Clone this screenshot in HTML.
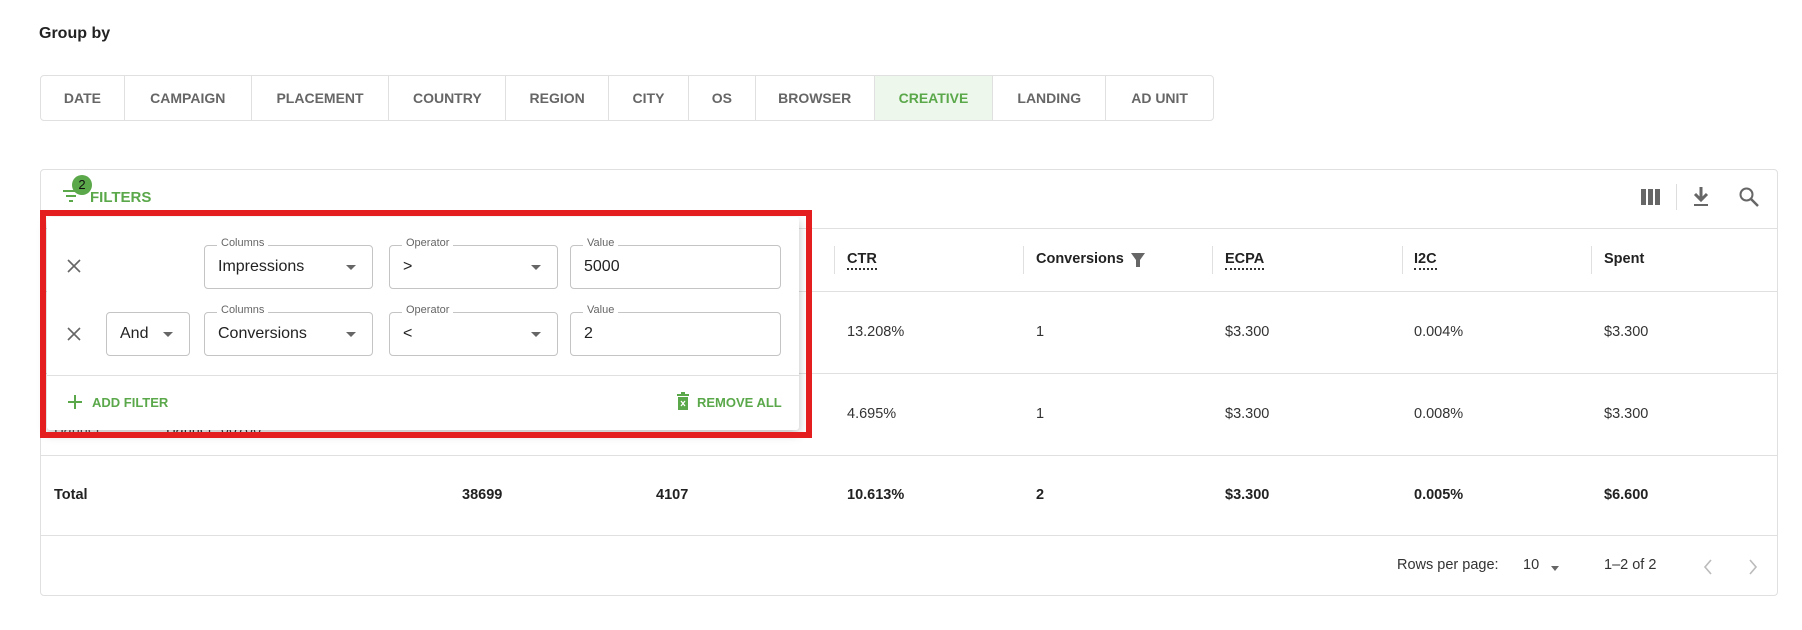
<!DOCTYPE html>
<html><head><meta charset="utf-8"><style>
*{box-sizing:border-box;margin:0;padding:0}
body{width:1802px;height:630px;background:#fff;font-family:"Liberation Sans",sans-serif;color:#222;position:relative;overflow:hidden}
.a{position:absolute;white-space:nowrap}
.tabs{position:absolute;left:40px;top:75px;width:1174px;height:46px;border:1px solid #e0e0e0;border-radius:4px;display:flex;overflow:hidden}
.tab{height:100%;border-right:1px solid #e0e0e0;display:flex;align-items:center;justify-content:center;font-size:14px;font-weight:bold;color:#666}
.tab:last-child{border-right:none}
.card{position:absolute;left:40px;top:169px;width:1738px;height:427px;border:1px solid #e0e0e0;border-radius:4px}
.hl{position:absolute;left:40px;width:1738px;height:1px;background:#e0e0e0}
.vd{position:absolute;width:1px;height:28px;background:#e0e0e0;top:246px}
.th{font-weight:bold;font-size:14.5px;color:#222}
.dot{border-bottom:2px dotted #333;padding-bottom:1px}
.td{font-size:14.5px;color:#333}
.b{font-weight:bold;color:#222}
.panel{position:absolute;left:47px;top:217px;width:752px;height:213px;background:#fff;box-shadow:0 4px 10px rgba(0,0,0,.25);border-radius:3px}
.red{position:absolute;left:40px;top:210px;width:772px;height:228px;border:6px solid #e41e1e}
.fld{position:absolute;height:44px;border:1px solid #c4c4c4;border-radius:4px;font-size:16px;color:#222;display:flex;align-items:center;padding-left:13px}
.lbl{position:absolute;top:-9px;left:12px;background:#fff;padding:0 4px;font-size:11px;color:#666}
.car{position:absolute;right:16px;top:19px;width:0;height:0;border-left:5px solid transparent;border-right:5px solid transparent;border-top:5px solid #666}
.grn{color:#5aa84a;font-weight:bold;font-size:13px}
</style></head><body>
<div class="a" style="left:39px;top:25px;font-size:16px;font-weight:bold;color:#222">Group by</div>
<div class="tabs">
<div class="tab" style="width:84px">DATE</div>
<div class="tab" style="width:127px">CAMPAIGN</div>
<div class="tab" style="width:138px">PLACEMENT</div>
<div class="tab" style="width:117px">COUNTRY</div>
<div class="tab" style="width:103px">REGION</div>
<div class="tab" style="width:80px">CITY</div>
<div class="tab" style="width:67px">OS</div>
<div class="tab" style="width:119px">BROWSER</div>
<div class="tab" style="width:119px;background:#eef7ec;color:#5aa84a">CREATIVE</div>
<div class="tab" style="width:113px">LANDING</div>
<div class="tab" style="width:107px">AD UNIT</div>
</div>
<div class="card"></div>
<div class="hl" style="top:228px"></div>
<div class="hl" style="top:291px"></div>
<div class="hl" style="top:373px"></div>
<div class="hl" style="top:455px"></div>
<div class="hl" style="top:535px"></div>
<svg class="a" style="left:62px;top:188px" width="18" height="16" viewBox="0 0 18 16"><path d="M1 3h16M4 8h10M7 13h4" stroke="#5aa84a" stroke-width="2"/></svg>
<div class="a" style="left:72px;top:175px;width:20px;height:20px;border-radius:50%;background:#5aa84a;color:#111;font-size:13px;text-align:center;line-height:20px">2</div>
<div class="a grn" style="left:90px;top:189px;font-size:15px">FILTERS</div>
<svg class="a" style="left:1641px;top:189px" width="20" height="16"><rect x="0" y="0" width="5" height="16" fill="#666"/><rect x="7" y="0" width="5" height="16" fill="#666"/><rect x="14" y="0" width="5" height="16" fill="#666"/></svg>
<div class="a" style="left:1676px;top:184px;width:1px;height:26px;background:#ddd"></div>
<svg class="a" style="left:1691px;top:186px" width="20" height="22" viewBox="0 0 20 22"><path d="M10 1v11M4 8l6 6 6-6" stroke="#666" stroke-width="3" fill="none"/><rect x="3" y="18" width="14" height="2" fill="#666"/></svg>
<svg class="a" style="left:1738px;top:186px" width="22" height="22" viewBox="0 0 22 22"><circle cx="8.5" cy="8.5" r="6" stroke="#666" stroke-width="2" fill="none"/><path d="M13 13l7 7" stroke="#666" stroke-width="2.5"/></svg>
<div class="vd" style="left:834px"></div><div class="vd" style="left:1023px"></div><div class="vd" style="left:1212px"></div><div class="vd" style="left:1402px"></div><div class="vd" style="left:1591px"></div>
<div class="a th" style="left:847px;top:251px"><span class="dot">CTR</span></div>
<div class="a th" style="left:1036px;top:251px">Conversions</div>
<svg class="a" style="left:1130px;top:252px" width="16" height="16"><path d="M1 1h14l-5 7v7h-4v-7z" fill="#666"/></svg>
<div class="a th" style="left:1225px;top:251px"><span class="dot">ECPA</span></div>
<div class="a th" style="left:1414px;top:251px"><span class="dot">I2C</span></div>
<div class="a th" style="left:1604px;top:251px">Spent</div>
<div class="a td" style="left:847px;top:324px">13.208%</div><div class="a td" style="left:1036px;top:324px">1</div><div class="a td" style="left:1225px;top:324px">$3.300</div><div class="a td" style="left:1414px;top:324px">0.004%</div><div class="a td" style="left:1604px;top:324px">$3.300</div>
<div class="a td" style="left:54px;top:422px;color:#555">Banner</div><div class="a td" style="left:166px;top:422px">Banner_00700</div>
<div class="a td" style="left:847px;top:406px">4.695%</div><div class="a td" style="left:1036px;top:406px">1</div><div class="a td" style="left:1225px;top:406px">$3.300</div><div class="a td" style="left:1414px;top:406px">0.008%</div><div class="a td" style="left:1604px;top:406px">$3.300</div>
<div class="a td b" style="left:54px;top:487px">Total</div><div class="a td b" style="left:462px;top:487px">38699</div><div class="a td b" style="left:656px;top:487px">4107</div><div class="a td b" style="left:847px;top:487px">10.613%</div><div class="a td b" style="left:1036px;top:487px">2</div><div class="a td b" style="left:1225px;top:487px">$3.300</div><div class="a td b" style="left:1414px;top:487px">0.005%</div><div class="a td b" style="left:1604px;top:487px">$6.600</div>
<div class="a td" style="left:1397px;top:557px;color:#333">Rows per page:</div>
<div class="a td" style="left:1523px;top:557px">10</div>
<div class="a" style="left:1551px;top:566px;border-left:4px solid transparent;border-right:4px solid transparent;border-top:5px solid #666"></div>
<div class="a td" style="left:1604px;top:557px">1–2 of 2</div>
<svg class="a" style="left:1702px;top:558px" width="12" height="18"><path d="M9 2l-6 7 6 7" stroke="#bbb" stroke-width="1.6" fill="none"/></svg>
<svg class="a" style="left:1747px;top:558px" width="12" height="18"><path d="M3 2l6 7-6 7" stroke="#bbb" stroke-width="1.6" fill="none"/></svg>
<div class="panel">
<div style="position:absolute;left:0;top:158px;width:100%;height:1px;background:#e0e0e0"></div>
</div>
<svg class="a" style="left:67px;top:259px" width="14" height="14"><path d="M1 1l12 12M13 1L1 13" stroke="#666" stroke-width="1.6"/></svg>
<svg class="a" style="left:67px;top:327px" width="14" height="14"><path d="M1 1l12 12M13 1L1 13" stroke="#666" stroke-width="1.6"/></svg>
<div class="fld" style="left:204px;top:245px;width:169px"><span class="lbl">Columns</span>Impressions<span class="car"></span></div>
<div class="fld" style="left:389px;top:245px;width:169px"><span class="lbl">Operator</span>&gt;<span class="car"></span></div>
<div class="fld" style="left:570px;top:245px;width:211px"><span class="lbl">Value</span>5000</div>
<div class="fld" style="left:106px;top:312px;width:84px">And<span class="car"></span></div>
<div class="fld" style="left:204px;top:312px;width:169px"><span class="lbl">Columns</span>Conversions<span class="car"></span></div>
<div class="fld" style="left:389px;top:312px;width:169px"><span class="lbl">Operator</span>&lt;<span class="car"></span></div>
<div class="fld" style="left:570px;top:312px;width:211px"><span class="lbl">Value</span>2</div>
<svg class="a" style="left:68px;top:395px" width="14" height="14"><path d="M7 0v14M0 7h14" stroke="#5aa84a" stroke-width="2"/></svg>
<div class="a grn" style="left:92px;top:395px">ADD FILTER</div>
<svg class="a" style="left:676px;top:392px" width="14" height="18" viewBox="0 0 14 18"><rect x="1" y="2" width="12" height="2" fill="#5aa84a"/><rect x="5" y="0" width="4" height="2" fill="#5aa84a"/><rect x="2" y="5" width="10" height="13" fill="#5aa84a"/><path d="M5 9l4 5M9 9l-4 5" stroke="#fff" stroke-width="1.3"/></svg>
<div class="a grn" style="left:697px;top:395px">REMOVE ALL</div>
<div class="red"></div>
</body></html>
